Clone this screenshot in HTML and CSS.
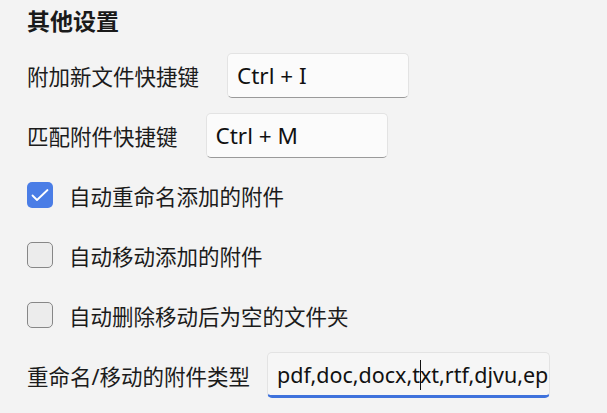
FILE: index.html
```html
<!DOCTYPE html>
<html lang="zh-CN">
<head>
<meta charset="utf-8">
<title>其他设置</title>
<link rel="stylesheet" href="styles.css">
</head>
<body>
<div class="panel">
  <div class="title">其他设置</div>
  <div class="row">
    <span class="label">附加新文件快捷键</span>
    <div class="field">Ctrl + I</div>
  </div>
  <div class="row">
    <span class="label">匹配附件快捷键</span>
    <div class="field">Ctrl + M</div>
  </div>
  <div class="row check-row">
    <span class="box checked">
      <svg width="26" height="26" viewBox="0 0 26 26"><polyline points="5.5,13.5 10,18 20.5,8" fill="none" stroke="#ffffff" stroke-width="1.8" stroke-linecap="round" stroke-linejoin="round"/></svg>
    </span>
    <span class="label">自动重命名添加的附件</span>
  </div>
  <div class="row check-row">
    <span class="box"></span>
    <span class="label">自动移动添加的附件</span>
  </div>
  <div class="row check-row">
    <span class="box"></span>
    <span class="label">自动删除移动后为空的文件夹</span>
  </div>
  <div class="row types-row">
    <span class="label">重命名/移动的附件类型</span>
    <div class="field wide focused">pdf,doc,docx,t<span class="caret"></span>xt,rtf,djvu,ep</div>
  </div>
</div>
</body>
</html>
```
FILE: styles.css
```css
html, body {
  margin: 0;
  padding: 0;
  background: #f3f3f3;
}
body {
  font-family: "Noto Sans", "Noto Sans CJK SC", sans-serif;
  color: #1b1b1b;
}
.panel {
  padding-left: 27px;
  width: 580px;
  height: 413px;
  overflow: hidden;
}
.title {
  height: 45px;
  line-height: 43px;
  font-size: 23px;
  font-weight: bold;
  color: #1a1a1a;
}
.row {
  height: 60px;
  display: flex;
  align-items: center;
  gap: 28px;
}
.label {
  font-size: 21.5px;
  white-space: nowrap;
}
.field {
  box-sizing: border-box;
  width: 182px;
  height: 45px;
  padding: 0 9px;
  display: flex;
  align-items: center;
  font-size: 22.5px;
  color: #111;
  background: #fbfbfb;
  border: 1px solid #e3e3e3;
  border-bottom-color: #9a9a9a;
  border-radius: 5px;
  white-space: nowrap;
  overflow: hidden;
}
.types-row {
  gap: 17px;
}
.field.wide {
  width: 283px;
  height: 46px;
  margin-top: -1px;
  font-size: 21.5px;
  padding-right: 1px;
}
.field.focused {
  background: #f6f6f6;
  border-bottom: 3px solid #3f72dc;
  padding-top: 2px;
}
.caret {
  display: inline-block;
  width: 0;
  height: 30px;
  border-left: 1px solid #111;
  margin-right: -1px;
}
.check-row {
  gap: 16px;
}
.box {
  box-sizing: border-box;
  width: 26px;
  height: 26px;
  border-radius: 5px;
  border: 1.5px solid #878787;
  background: #ececec;
  display: flex;
  align-items: center;
  justify-content: center;
}
.box.checked {
  background: #4a7de6;
  border: none;
}
```
